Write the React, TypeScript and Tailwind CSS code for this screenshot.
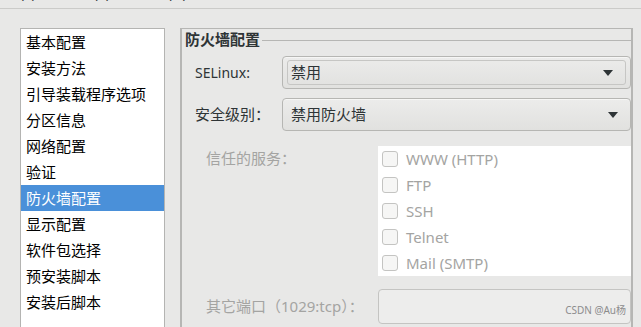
import React from 'react';

const sections = [
  '基本配置',
  '安装方法',
  '引导装载程序选项',
  '分区信息',
  '网络配置',
  '验证',
  '防火墙配置',
  '显示配置',
  '软件包选择',
  '预安装脚本',
  '安装后脚本',
];

const services = ['WWW (HTTP)', 'FTP', 'SSH', 'Telnet', 'Mail (SMTP)'];

const font = { fontFamily: '"Noto Sans", "Noto Sans CJK SC", sans-serif' };

const Arrow = () => (
  <svg width="10" height="6" viewBox="0 0 10 6" className="ml-auto mr-[12px]">
    <path d="M0 0 H10 L5 6 Z" fill="#2e3436" />
  </svg>
);

const Dropdown = ({ value, focused }: { value: string; focused?: boolean }) => (
  <div className="flex-1 h-[33px] rounded-[4px] border border-[#b6b6b3] bg-gradient-to-b from-[#ececeb] to-[#e1e1df] shadow-[0_1px_0_#f6f6f5_inset] flex items-center">
    {focused ? (
      <div className="flex-1 mx-[4px] h-[25px] rounded-[3px] border border-[#c6c6c4] flex items-center pl-[3px]">
        <span className="text-[15px] text-[#2e3436]">{value}</span>
        <Arrow />
      </div>
    ) : (
      <div className="flex-1 flex items-center pl-[8px]">
        <span className="text-[15px] text-[#2e3436]">{value}</span>
        <Arrow />
      </div>
    )}
  </div>
);

export default function App() {
  return (
    <div className="w-[641px] h-[327px] bg-[#e8e8e7] overflow-hidden" style={font}>
      {/* menu bar, mostly scrolled out of view */}
      <div className="h-[9px] border-b border-[#cbcbc9] overflow-hidden">
        <div className="flex gap-[30px] text-[14px] leading-[20px] text-[#2e3436] -mt-[17px] -ml-[8px]">
          <span>文件(F)</span>
          <span>编辑(E)</span>
          <span>帮助(H)</span>
        </div>
      </div>

      <div className="flex pt-[19px] pl-[20px]">
        {/* section list */}
        <div className="w-[145px] h-[310px] bg-white border border-[#b4b4b2]">
          {sections.map((s) => (
            <div
              key={s}
              className={
                'h-[26px] flex items-center pl-[5px] text-[15px] ' +
                (s === '防火墙配置' ? 'bg-[#4a90d9] text-white' : 'text-black')
              }
            >
              {s}
            </div>
          ))}
        </div>

        {/* firewall frame */}
        <div className="ml-[15px] w-[453px] h-[310px] border-t border-x-2 border-[#b6b6b4]">
          <div className="h-[21px] flex items-center">
            <span className="pl-[3px] pr-[2px] text-[15px] font-bold text-[#2e3436]">防火墙配置</span>
            <div className="flex-1 border-t border-[#b6b6b4] mt-[1px]" />
          </div>

          <div className="flex items-center mt-[6px] pl-[13px]">
            <span className="w-[87px] text-[14px] text-[#2e3436]">SELinux:</span>
            <Dropdown value="禁用" focused />
          </div>

          <div className="flex items-center mt-[9px] pl-[13px]">
            <span className="w-[87px] text-[15px] text-[#2e3436]">安全级别：</span>
            <Dropdown value="禁用防火墙" />
          </div>

          <div className="flex mt-[15px] pl-[24px]">
            <span className="w-[172px] text-[15px] text-[#a4a4a2] mt-[1px]">信任的服务：</span>
            <div className="flex-1 bg-white">
              {services.map((s) => (
                <div key={s} className="h-[26px] flex items-center pl-[4px]">
                  <div className="w-[16px] h-[16px] rounded-[3px] border border-[#c4c4c2] bg-[#f6f6f5]" />
                  <span className="ml-[8px] text-[15px] text-[#a4a4a2]">{s}</span>
                </div>
              ))}
            </div>
          </div>

          <div className="flex items-center mt-[13px] pl-[24px]">
            <span className="w-[172px] text-[15px] text-[#a4a4a2] whitespace-nowrap">其它端口（1029:tcp）：</span>
            <div className="flex-1 h-[35px] rounded-[4px] border border-[#c4c4c2] bg-[#ededec] relative">
              <span className="absolute right-[4px] bottom-[5px] text-[10px] text-[#8c8c8c]">CSDN @Au杨</span>
            </div>
          </div>
        </div>
      </div>
    </div>
  );
}
